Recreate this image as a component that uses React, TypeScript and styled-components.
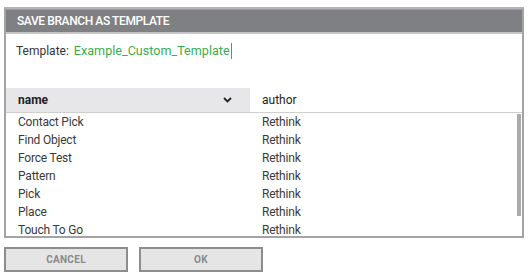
import React from 'react';
import styled, { createGlobalStyle } from 'styled-components';

const GlobalStyle = createGlobalStyle`
	html, body {
		margin: 0;
		padding: 0;
		background: #fff;
		font-family: Roboto, 'Liberation Sans', sans-serif;
	}
`;

const Page = styled.div`
	padding: 7px 5px 0 4px;
	width: 520px;
`;

const Dialog = styled.div`
	border: 2px solid #a3a3a3;
	border-top-color: #b4b4b4;
	background: #fff;
`;

const Header = styled.div`
	height: 23px;
	background: #7f8084;
	border-bottom: 2px solid #c6c6c6;
	box-shadow: inset 0 1px 0 #9a9a9c;
	color: #fff;
	font-size: 12px;
	font-weight: 500;
	line-height: 24px;
	padding-left: 11px;
	letter-spacing: -0.4px;
`;

const TemplateRow = styled.div`
	display: flex;
	gap: 5px;
	height: 54px;
	align-items: flex-start;
	padding: 9px 10px 0;
	font-size: 12px;
	color: #333;
	box-sizing: border-box;
`;

const TemplateName = styled.span`
	color: #3cad4a;
	font-size: 12.6px;
	border-right: 1px solid #3cad4a;
	padding-right: 1px;
	line-height: 16px;
`;

const Label = styled.span`
	line-height: 16px;
`;

const Table = styled.div`
	display: flex;
	flex-direction: column;
`;

const HeadRow = styled.div`
	display: grid;
	grid-template-columns: 244px 1fr;
	height: 24px;
	border-bottom: 1px solid #cfcfcf;
`;

const HeadCell = styled.div<{ $active?: boolean }>`
	display: flex;
	align-items: center;
	justify-content: space-between;
	padding: 0 18px 0 12px;
	font-size: 12px;
	font-weight: ${(p) => (p.$active ? 700 : 400)};
	color: #222;
	background: ${(p) => (p.$active ? '#e7e7e9' : '#fff')};
`;

const Body = styled.div`
	position: relative;
	height: 123px;
	overflow: hidden;
`;

const Row = styled.div`
	display: grid;
	grid-template-columns: 244px 1fr;
	height: 18px;
	align-items: center;
	font-size: 12px;
	letter-spacing: -0.2px;
	color: #3a3a3a;
`;

const Cell = styled.div`
	padding-left: 12px;
`;

const Scrollbar = styled.div`
	position: absolute;
	right: 1px;
	top: 1px;
	width: 4px;
	height: 102px;
	background: #ababab;
`;

const Buttons = styled.div`
	display: flex;
	gap: 11px;
	margin-top: 9px;
`;

const Button = styled.button`
	width: 124px;
	height: 25px;
	border: 2px solid #8d8d8d;
	background: #e5e5e5;
	color: #8a8a8a;
	font-family: Roboto, 'Liberation Sans', sans-serif;
	font-size: 10px;
	font-weight: 700;
	letter-spacing: 0.3px;
	padding: 0;
`;

const Chevron = () => (
	<svg width="9" height="6" viewBox="0 0 9 6">
		<path d="M1 1 L4.5 4.5 L8 1" fill="none" stroke="#222" strokeWidth="1.8" />
	</svg>
);

const rows = ['Contact Pick', 'Find Object', 'Force Test', 'Pattern', 'Pick', 'Place', 'Touch To Go'];

export default function App() {
	return (
		<>
			<GlobalStyle />
			<Page>
				<Dialog>
					<Header>SAVE BRANCH AS TEMPLATE</Header>
					<TemplateRow>
						<Label>Template:</Label>
						<TemplateName>Example_Custom_Template</TemplateName>
					</TemplateRow>
					<Table>
						<HeadRow>
							<HeadCell $active>
								name
								<Chevron />
							</HeadCell>
							<HeadCell>author</HeadCell>
						</HeadRow>
						<Body>
							{rows.map((r) => (
								<Row key={r}>
									<Cell>{r}</Cell>
									<Cell>Rethink</Cell>
								</Row>
							))}
							<Scrollbar />
						</Body>
					</Table>
				</Dialog>
				<Buttons>
					<Button>CANCEL</Button>
					<Button>OK</Button>
				</Buttons>
			</Page>
		</>
	);
}
